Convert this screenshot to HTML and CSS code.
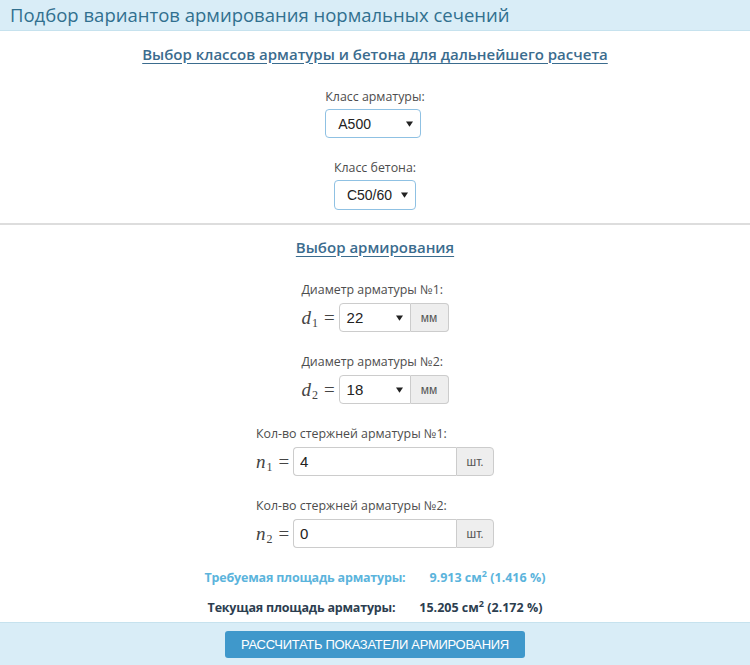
FILE: index.html
```html
<!DOCTYPE html>
<html lang="ru">
<head>
    <meta charset="UTF-8"/>
    <link rel="stylesheet" href="styles.css">
</head>
<body>
<main class="panel">
    <header class="panel__heading">Подбор вариантов армирования нормальных сечений</header>

    <section class="panel__section panel__section--classes">
        <h2 class="panel__title">Выбор классов арматуры и бетона для дальнейшего расчета</h2>

        <div class="field field--first">
            <label class="field__label">Класс арматуры:</label>
            <div class="select select--focus select--rebar">
                <span class="select__value">A500</span>
                <svg class="select__arrow" viewBox="0 0 8 6" aria-hidden="true"><path d="M0 0h8L4 6z"/></svg>
            </div>
        </div>

        <div class="field">
            <label class="field__label">Класс бетона:</label>
            <div class="select select--focus select--concrete">
                <span class="select__value">C50/60</span>
                <svg class="select__arrow" viewBox="0 0 8 6" aria-hidden="true"><path d="M0 0h8L4 6z"/></svg>
            </div>
        </div>
    </section>

    <section class="panel__section panel__section--reinf">
        <h2 class="panel__title">Выбор армирования</h2>

        <div class="field field--first">
            <label class="field__label">Диаметр арматуры №1:</label>
            <div class="row">
                <span class="math"><i>d</i><sub>1</sub><span class="math__eq">=</span></span>
                <div class="group">
                    <div class="select select--dia">
                        <span class="select__value">22</span>
                        <svg class="select__arrow" viewBox="0 0 8 6" aria-hidden="true"><path d="M0 0h8L4 6z"/></svg>
                    </div>
                    <span class="group__addon">мм</span>
                </div>
            </div>
        </div>

        <div class="field">
            <label class="field__label">Диаметр арматуры №2:</label>
            <div class="row">
                <span class="math"><i>d</i><sub>2</sub><span class="math__eq">=</span></span>
                <div class="group">
                    <div class="select select--dia">
                        <span class="select__value">18</span>
                        <svg class="select__arrow" viewBox="0 0 8 6" aria-hidden="true"><path d="M0 0h8L4 6z"/></svg>
                    </div>
                    <span class="group__addon">мм</span>
                </div>
            </div>
        </div>

        <div class="field">
            <label class="field__label">Кол-во стержней арматуры №1:</label>
            <div class="row">
                <span class="math"><i>n</i><sub>1</sub><span class="math__eq">=</span></span>
                <div class="group">
                    <input class="group__input" type="text" value="4">
                    <span class="group__addon">шт.</span>
                </div>
            </div>
        </div>

        <div class="field">
            <label class="field__label">Кол-во стержней арматуры №2:</label>
            <div class="row">
                <span class="math"><i>n</i><sub>2</sub><span class="math__eq">=</span></span>
                <div class="group">
                    <input class="group__input" type="text" value="0">
                    <span class="group__addon">шт.</span>
                </div>
            </div>
        </div>

        <div class="area area--required">
            <span class="area__label">Требуемая площадь арматуры:</span>
            <span class="area__value">9.913 см<sup>2</sup> (1.416 %)</span>
        </div>
        <div class="area area--current">
            <span class="area__label">Текущая площадь арматуры:</span>
            <span class="area__value">15.205 см<sup>2</sup> (2.172 %)</span>
        </div>
    </section>

    <footer class="panel__footer">
        <button class="btn" type="button">РАССЧИТАТЬ ПОКАЗАТЕЛИ АРМИРОВАНИЯ</button>
    </footer>
</main>
</body>
</html>
```

FILE: styles.css
```css
html, body {
    margin: 0;
    background: #ffffff;
}

body {
    font-family: "Open Sans", "Noto Sans", sans-serif;
    color: #333333;
}

.panel {
    width: 750px;
    height: 665px;
    display: flex;
    flex-direction: column;
}

.panel__heading {
    height: 30px;
    line-height: 30px;
    padding: 0 10px;
    font-size: 18.5px;
    color: #31708f;
    background: #d9edf7;
    border-bottom: 1px solid #c6e2ee;
    white-space: nowrap;
}

.panel__section {
    display: flex;
    flex-direction: column;
    align-items: center;
}

.panel__section--classes {
    padding: 12px 0 13px;
    border-bottom: 2px solid #dddddd;
}

.panel__section--reinf {
    padding-top: 11px;
    flex: 1;
}

.panel__title {
    margin: 0;
    font-size: 15px;
    line-height: 22px;
    font-weight: 600;
    color: #3b6c8e;
    text-decoration: underline;
    text-underline-offset: 3px;
}

.field {
    display: flex;
    flex-direction: column;
    align-items: flex-start;
    margin-top: 21px;
}

.field--first {
    margin-top: 23px;
}

.field__label {
    font-size: 12.4px;
    line-height: 18px;
    color: #4d4d4d;
    margin-bottom: 4px;
}

.panel__section--classes .field__label {
    margin-bottom: 3px;
}

.select {
    position: relative;
    box-sizing: border-box;
    height: 29px;
    display: flex;
    align-items: center;
    padding-left: 12px;
    border: 1px solid #cccccc;
    border-radius: 4px;
    background: #ffffff;
    font-family: "Liberation Sans", Arial, sans-serif;
    font-size: 14px;
    color: #222222;
}

.select--focus {
    border-color: #8fc1e3;
}

.select--rebar {
    width: 96px;
    height: 29px;
}

.select--concrete {
    width: 82px;
    height: 30px;
}

.select--dia {
    width: 72px;
    padding-left: 7px;
    font-size: 15px;
    border-radius: 4px 0 0 4px;
}

.select__arrow {
    position: absolute;
    right: 7px;
    top: 50%;
    width: 7px;
    height: 6px;
    margin-top: -3px;
    fill: #222222;
}

.row {
    display: flex;
    align-items: center;
    height: 29px;
    gap: 4px;
}

.math {
    display: flex;
    align-items: baseline;
    font-family: "Liberation Serif", "DejaVu Serif", serif;
    line-height: 1;
    color: #444444;
    white-space: nowrap;
}

.math i {
    font-size: 19px;
}

.math sub {
    font-size: 12px;
    position: relative;
    top: 3px;
    margin-left: 1px;
}

.math__eq {
    font-size: 19px;
    margin-left: 6px;
}

.group {
    display: flex;
    height: 29px;
}

.group__input {
    box-sizing: border-box;
    width: 163px;
    height: 29px;
    margin: 0;
    padding: 0 6px;
    border: 1px solid #cccccc;
    border-right: none;
    border-radius: 4px 0 0 4px;
    font-family: "Liberation Sans", Arial, sans-serif;
    font-size: 15px;
    color: #222222;
    outline: none;
}

.group__addon {
    box-sizing: border-box;
    width: 38px;
    display: flex;
    align-items: center;
    justify-content: center;
    border: 1px solid #cccccc;
    border-radius: 0 4px 4px 0;
    background: #eeeeee;
    font-family: "Liberation Sans", Arial, sans-serif;
    font-size: 12px;
    color: #555555;
}

.select--dia + .group__addon {
    border-left: none;
}

.area {
    display: flex;
    gap: 24px;
    font-size: 12.5px;
    line-height: 18px;
    font-weight: 700;
    white-space: nowrap;
}

.area__label {
    letter-spacing: -0.2px;
}

.area sup {
    font-size: 9px;
    line-height: 0;
}

.area--required {
    margin-top: 21px;
    color: #5bb4dc;
}

.area--current {
    margin-top: 12px;
    color: #2c3e50;
}

.panel__footer {
    height: 42px;
    display: flex;
    align-items: center;
    justify-content: center;
    background: #d9edf7;
    border-top: 1px solid #c6e2ee;
}

.btn {
    width: 300px;
    height: 27px;
    padding: 0;
    border: none;
    border-radius: 3px;
    background: #3f98cb;
    color: #ffffff;
    font-family: "Liberation Sans", Arial, sans-serif;
    font-size: 13px;
    letter-spacing: -0.3px;
    white-space: nowrap;
    cursor: pointer;
}
```
